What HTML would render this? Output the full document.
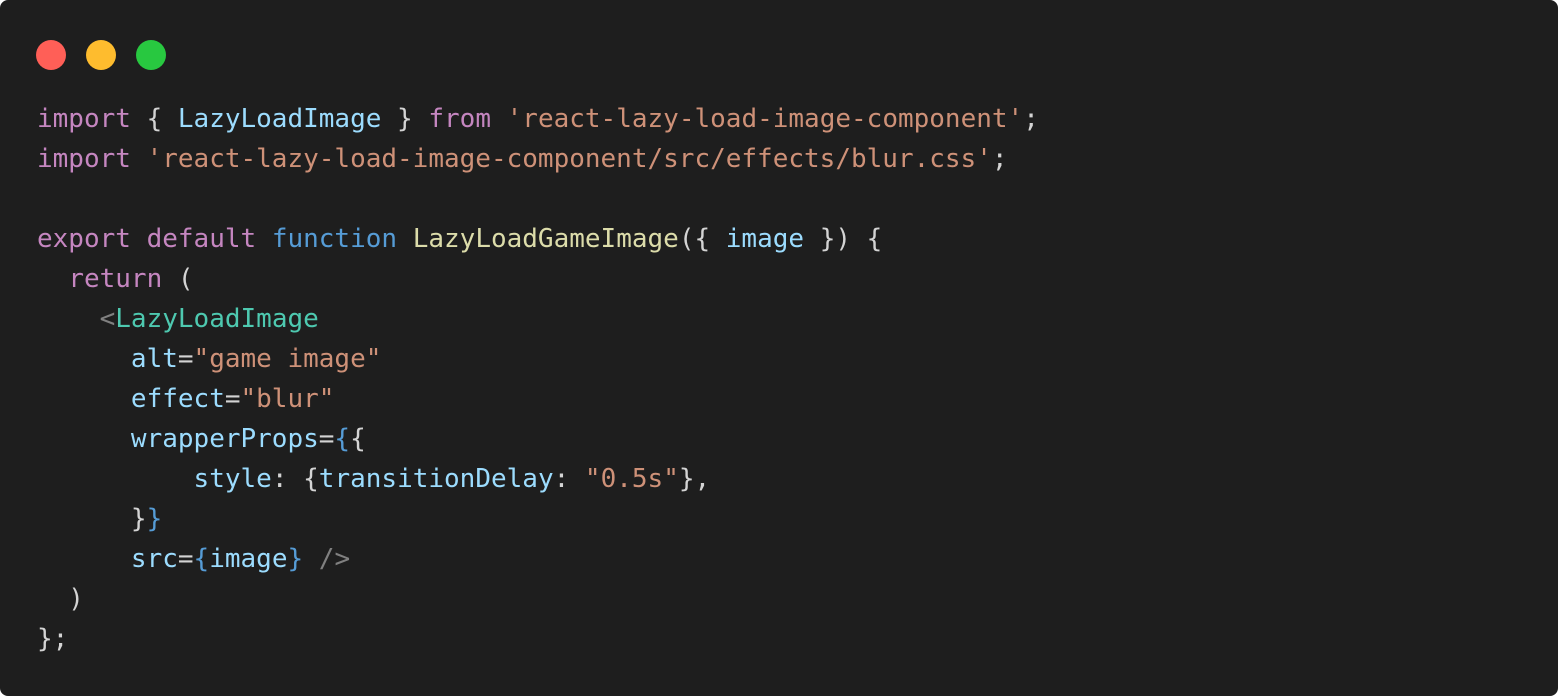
<!DOCTYPE html>
<html><head><style>
html,body{margin:0;padding:0;background:#fff;}
.win{position:absolute;left:0;top:0;width:1558px;height:696px;background:#1e1e1e;border-radius:8px;overflow:hidden;}
.d{position:absolute;top:40px;width:30px;height:30px;border-radius:50%;}
pre{position:absolute;left:37px;top:99px;margin:0;font-family:"DejaVu Sans Mono","Liberation Mono",monospace;font-size:26px;line-height:40px;color:#d4d4d4;}
.k{color:#c586c0}.v{color:#9cdcfe}.s{color:#ce9178}.f{color:#dcdcaa}.b{color:#569cd6}.t{color:#4ec9b0}.g{color:#808080}
</style></head><body>
<div class="win">
<div class="d" style="left:36px;background:#ff5f57"></div>
<div class="d" style="left:86px;background:#febc2e"></div>
<div class="d" style="left:136px;background:#28c840"></div>
<pre><span class="k">import</span> { <span class="v">LazyLoadImage</span> } <span class="k">from</span> <span class="s">'react-lazy-load-image-component'</span>;
<span class="k">import</span> <span class="s">'react-lazy-load-image-component/src/effects/blur.css'</span>;

<span class="k">export</span> <span class="k">default</span> <span class="b">function</span> <span class="f">LazyLoadGameImage</span>({ <span class="v">image</span> }) {
  <span class="k">return</span> (
    <span class="g">&lt;</span><span class="t">LazyLoadImage</span>
      <span class="v">alt</span>=<span class="s">"game image"</span>
      <span class="v">effect</span>=<span class="s">"blur"</span>
      <span class="v">wrapperProps</span>=<span class="b">{</span>{
          <span class="v">style</span>: {<span class="v">transitionDelay</span>: <span class="s">"0.5s"</span>},
      }<span class="b">}</span>
      <span class="v">src</span>=<span class="b">{</span><span class="v">image</span><span class="b">}</span> <span class="g">/&gt;</span>
  )
};</pre>
</div>
</body></html>
